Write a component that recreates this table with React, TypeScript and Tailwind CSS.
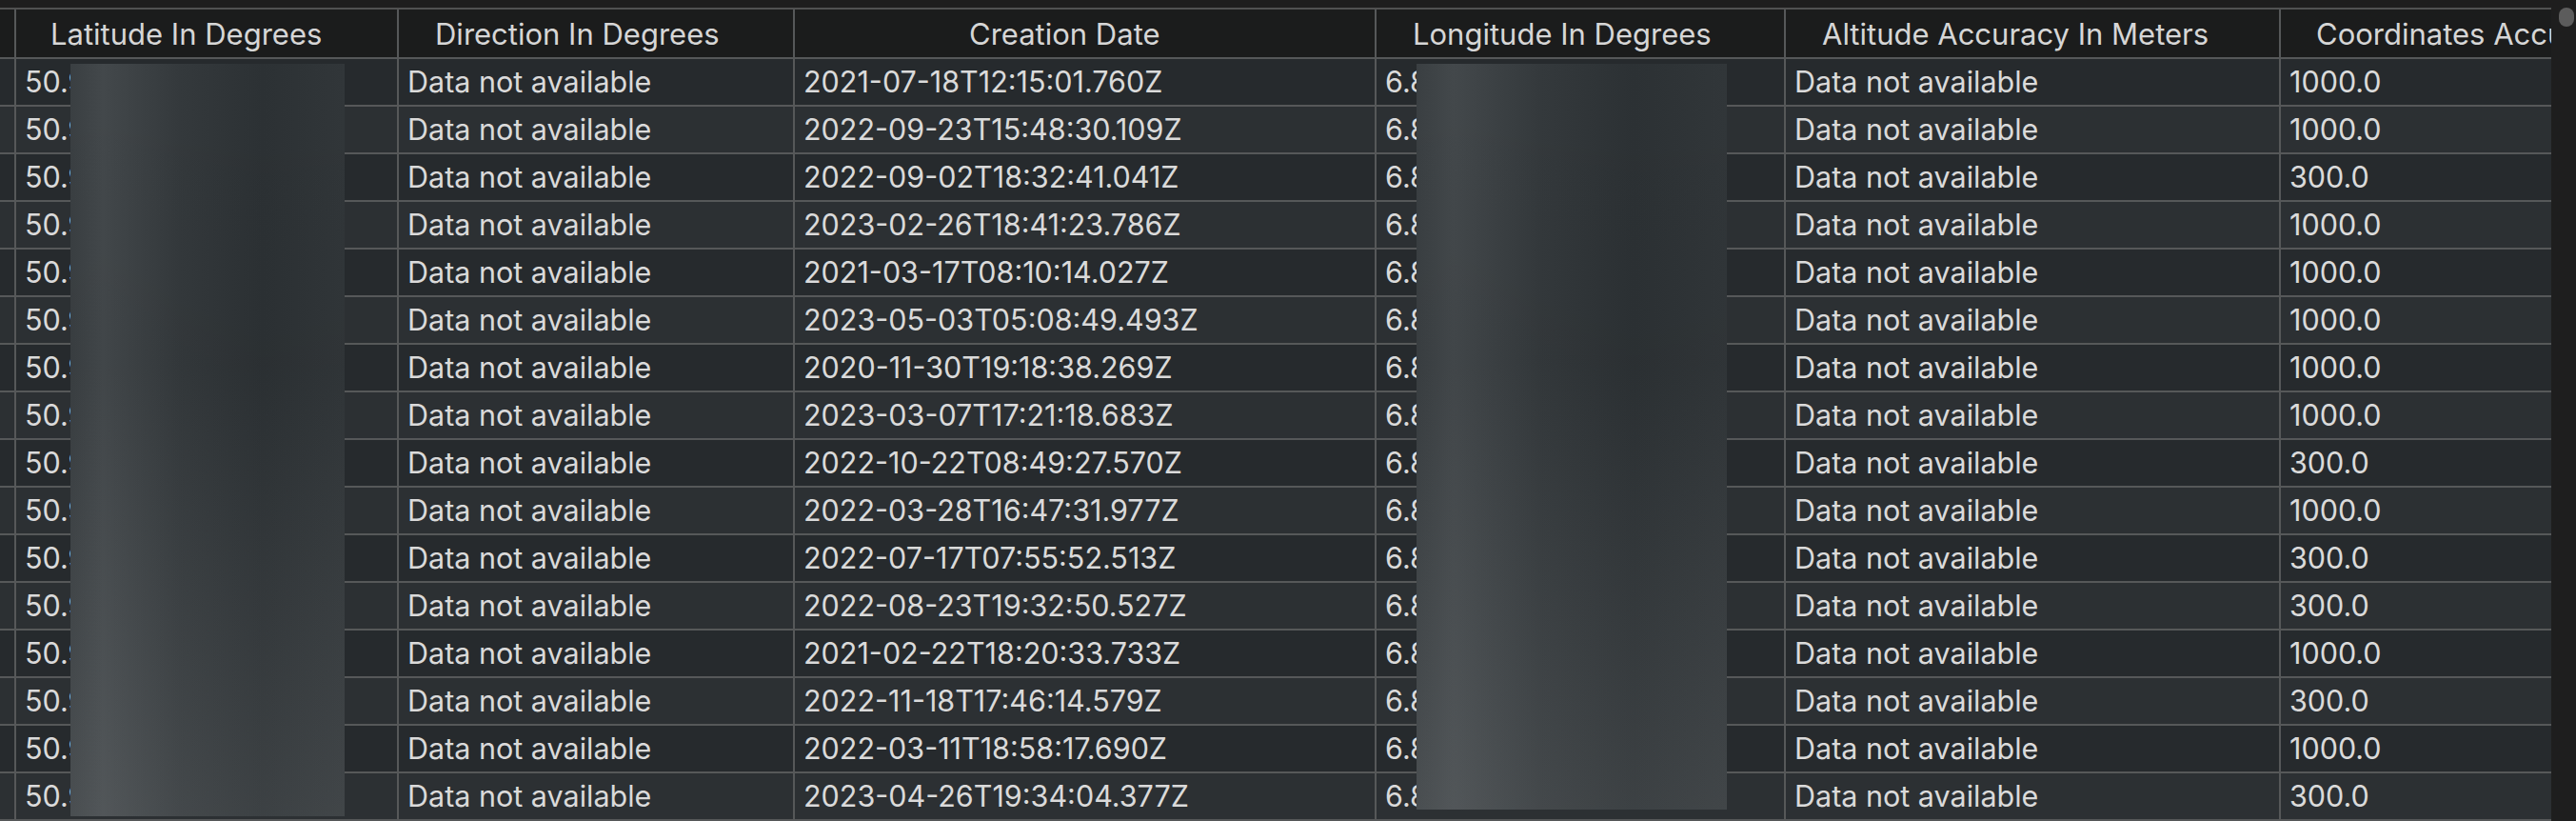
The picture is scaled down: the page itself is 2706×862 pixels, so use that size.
const columns = [
  { title: "", width: "w-[17px]", headPad: "pl-0" },
  { title: "Latitude In Degrees", width: "w-[402px]", headPad: "pl-[36px]" },
  { title: "Direction In Degrees", width: "w-[416px]", headPad: "pl-[38px]" },
  { title: "Creation Date", width: "w-[611px]", headPad: "pl-[183px]" },
  { title: "Longitude In Degrees", width: "w-[430px]", headPad: "pl-[38px]" },
  { title: "Altitude Accuracy In Meters", width: "w-[520px]", headPad: "pl-[38px]" },
  { title: "Coordinates Accuracy In Meters", width: "w-[600px]", headPad: "pl-[37px]" },
];

const rows = [
  ["2021-07-18T12:15:01.760Z", "1000.0"],
  ["2022-09-23T15:48:30.109Z", "1000.0"],
  ["2022-09-02T18:32:41.041Z", "300.0"],
  ["2023-02-26T18:41:23.786Z", "1000.0"],
  ["2021-03-17T08:10:14.027Z", "1000.0"],
  ["2023-05-03T05:08:49.493Z", "1000.0"],
  ["2020-11-30T19:18:38.269Z", "1000.0"],
  ["2023-03-07T17:21:18.683Z", "1000.0"],
  ["2022-10-22T08:49:27.570Z", "300.0"],
  ["2022-03-28T16:47:31.977Z", "1000.0"],
  ["2022-07-17T07:55:52.513Z", "300.0"],
  ["2022-08-23T19:32:50.527Z", "300.0"],
  ["2021-02-22T18:20:33.733Z", "1000.0"],
  ["2022-11-18T17:46:14.579Z", "300.0"],
  ["2022-03-11T18:58:17.690Z", "1000.0"],
  ["2023-04-26T19:34:04.377Z", "300.0"],
];

const Redaction = ({ className }: { className: string }) => (
  <div
    className={`absolute bg-[linear-gradient(90deg,#3a3f42_0%,#43484b_12%,#34393c_40%,#2c3134_70%,#313639_100%)] ${className}`}
  >
    <div className="h-full w-full bg-[linear-gradient(180deg,rgba(0,0,0,0)_0%,rgba(0,0,0,0.03)_40%,rgba(255,255,255,0.08)_100%)]" />
  </div>
);

export default function App() {
  return (
    <div
      className="flex h-[862px] w-full overflow-hidden bg-[#1e1e1e] text-[#dadada]"
      style={{ fontFamily: "Inter, 'Noto Sans', sans-serif" }}
    >
      <div className="relative w-[2680px] shrink-0 overflow-hidden">
        <div className="h-[8px] border-b-2 border-[#505151] box-content" />

        {/* header */}
        <div className="flex h-[52px] w-max bg-[#1b1c1c]">
          {columns.map((col, i) => (
            <div
              key={i}
              className={`${col.width} ${col.headPad} flex h-full shrink-0 items-center border-r-2 border-b-2 border-[#565859] text-[31px] leading-none whitespace-nowrap text-[#d6d6d6]`}
            >
              {col.title}
            </div>
          ))}
        </div>

        {/* body */}
        {rows.map(([date, acc], r) => {
          const cells = ["", "50.9", "Data not available", date, "6.8", "Data not available", acc];
          return (
            <div
              key={r}
              className={`flex h-[50px] w-max ${r % 2 === 0 ? "bg-[#262a2d]" : "bg-[#2c3033]"}`}
            >
              {cells.map((text, i) => (
                <div
                  key={i}
                  className={`${columns[i].width} flex h-full shrink-0 items-center border-r-2 border-b-2 border-[#565859] pl-[9px] text-[30.5px] leading-none whitespace-nowrap`}
                >
                  {text}
                </div>
              ))}
            </div>
          );
        })}

        <Redaction className="left-[74px] top-[67px] h-[790px] w-[288px]" />
        <Redaction className="left-[1488px] top-[67px] h-[783px] w-[326px]" />
      </div>

      {/* scrollbar */}
      <div className="w-[26px] shrink-0 bg-[#1e1e1e]">
        <div className="ml-[8px] mt-[8px] h-[20px] w-[16px] rounded-full bg-[#5c5c5c]" />
      </div>
    </div>
  );
}
